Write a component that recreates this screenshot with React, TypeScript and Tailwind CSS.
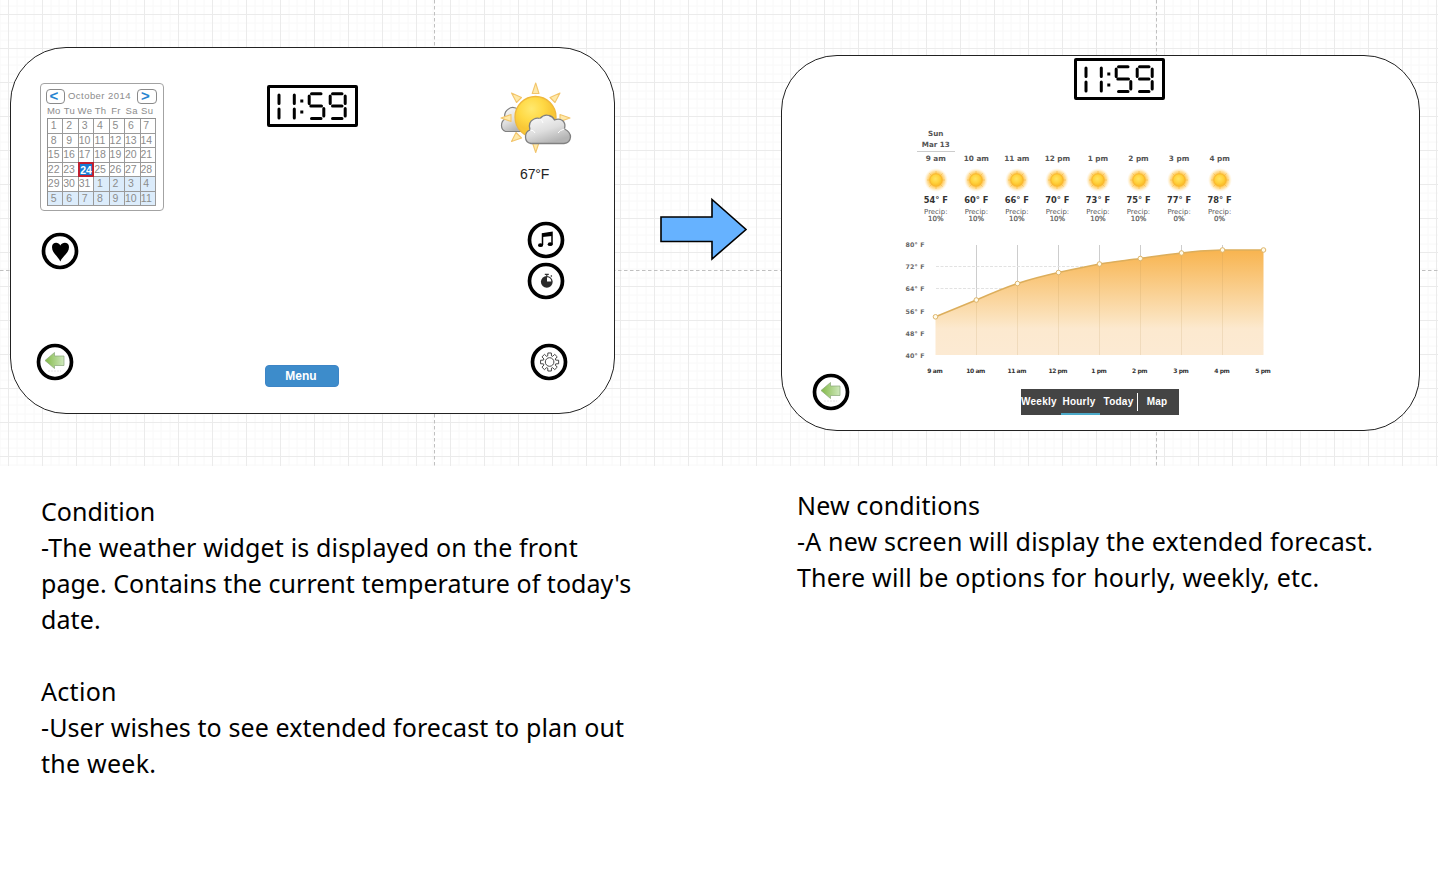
import React from "react";

function Clock() {
  return (
    <svg viewBox="0 0 91 42" className="h-[42px] w-[91px]">
      <rect x="1.5" y="1.5" width="88" height="39" rx="0.5" fill="#fff" stroke="#000" strokeWidth="3" />
      <g stroke="#000" strokeWidth="3" strokeLinecap="round" fill="none">
        <path d="M12 10V18.500M12 24V33M27.300 10V18.500M27.300 24V33" />
        <path d="M44.500 8.800H54M43.800 20.900H54.500M44.500 33.400H54M42.200 11V18.500M56.800 23.500V31" />
        <path d="M65.500 8.800H75M65.500 20.900H75M65.500 33.400H75M63.200 11V18.500M78.200 11V18.500M78.200 23.500V31" />
      </g>
      <path d="M33.300 14.500h3v3h-3zM33.300 25.500h3v3h-3z" />
    </svg>
  );
}

const days = [1,2,3,4,5,6,7,8,9,10,11,12,13,14,15,16,17,18,19,20,21,22,23,24,25,26,27,28,29,30,31,1,2,3,4,5,6,7,8,9,10,11];

function Calendar() {
  return (
    <div className="h-[128px] w-[124px] rounded-[4px] border border-[#a3a3a3] bg-white px-[5px] pt-[5px] text-[#8c8c8c]">
      <div className="flex h-[15px] items-center gap-[2px]">
        <div className="flex h-[15px] w-[19px] items-center justify-center rounded-[4px] border border-[#8a8a8a] pr-[3px] pb-[2px] text-[15px] leading-none font-bold text-[#2684d0]">&lt;</div>
        <span className="w-[68px] pr-[3px] text-center text-[9.500px] tracking-[0.450px] whitespace-nowrap">October 2014</span>
        <div className="flex h-[15px] w-[20px] items-center justify-center rounded-[4px] border border-[#8a8a8a] pr-[3px] pb-[2px] text-[15px] leading-none font-bold text-[#2684d0]">&gt;</div>
      </div>
      <div className="grid h-[14px] w-[109px] grid-cols-7 text-center text-[9.500px] leading-[13px] tracking-[0.300px]">
        {["Mo", "Tu", "We", "Th", "Fr", "Sa", "Su"].map((d) => <span key={d} className="-mx-px">{d}</span>)}
      </div>
      <div className="ml-[1px] grid h-[88px] w-[109px] grid-cols-7 grid-rows-6 border-t border-l border-[#909090] text-center text-[10.500px] leading-[13px]">
        {days.map((d, i) => (
          <span key={i} className={i === 23 ? "-mt-px -ml-px border-2 border-[#c02030] bg-[#167bd5] text-[10.500px] leading-[12px] font-bold text-white" : i > 30 ? "border-r border-b border-[#9a9a9a] bg-[#dcecfb] pr-[3px]" : "border-r border-b border-[#9a9a9a] pr-[3px]"}>
            <span className={i === 23 ? "-mx-[1px]" : "-mx-[2px]"}>{d}</span>
          </span>
        ))}
      </div>
    </div>
  );
}

function Ring({ children }: { children: React.ReactNode }) {
  return (
    <svg viewBox="0 0 38 38" className="h-[38px] w-[38px]">
      <circle cx="19" cy="19" r="16.500" fill="#fff" stroke="#000" strokeWidth="3.700" />
      {children}
    </svg>
  );
}

function BackIcon() {
  return (
    <Ring>
      <defs>
        <linearGradient id="leaf"><stop stopColor="#82b947" /><stop offset="1" stopColor="#cfe8bd" /></linearGradient>
      </defs>
      <path d="M9 17.500L18.500 9.500V13H28V22.500H18.500V25.500Z" fill="url(#leaf)" stroke="#8aa878" strokeWidth="0.700" />
      <path d="M12 28H25" stroke="#ddd" strokeWidth="0.800" strokeDasharray="2 1" />
    </Ring>
  );
}

function GearIcon() {
  const pts: string[] = [];
  for (let i = 0; i < 8; i++) {
    const a = (i * Math.PI) / 4 - Math.PI / 2;
    [[-0.3, 6.4], [-0.19, 9.2], [0.19, 9.2], [0.3, 6.4]].forEach(([o, r]) => pts.push((19.6 + r * Math.cos(a + o)).toFixed(2) + "," + (19 + r * Math.sin(a + o)).toFixed(2)));
  }
  return (
    <Ring>
      <polygon points={pts.join(" ")} fill="none" stroke="#333" strokeWidth="0.900" strokeLinejoin="round" />
      <circle cx="19.600" cy="19" r="4.300" fill="none" stroke="#333" strokeWidth="0.900" />
    </Ring>
  );
}

function Weather() {
  return (
    <svg viewBox="0 0 74 74" className="h-[74px] w-[74px]">
      <defs>
        <radialGradient id="sun" cx="0.4" cy="0.3"><stop stopColor="#ffe96f" /><stop offset="0.600" stopColor="#ffd945" /><stop offset="1" stopColor="#f8c736" /></radialGradient>
        <linearGradient id="cloud" x2="0.500" y2="1"><stop stopColor="#fff" /><stop offset="0.600" stopColor="#dedede" /><stop offset="1" stopColor="#b4b4b4" /></linearGradient>
      </defs>
      <path d="M5.500 50.500Q1.500 49 1.500 44.500Q1.500 40 5 38Q3.500 31 8.500 28Q13 24.500 19 29L25 50.500Z" fill="url(#cloud)" stroke="#808080" strokeWidth="1.200" />
      <g fill="#ffe9a8" stroke="#f2c56c" strokeWidth="1.100" strokeLinejoin="round">
        <path d="M35.700 2L39 12.500H32.200ZM11.500 12L21.500 16.500L16.500 21.500ZM60 12L55 21.500L50 16.500ZM70 37L60 40.500V33.500ZM1 37L11 33.500V40.500ZM11.500 60.500L16 51.500L21.500 57ZM35.700 71.500L32.700 62.500H38.700Z" />
      </g>
      <circle cx="35.500" cy="36" r="20.500" fill="url(#sun)" stroke="#efb83c" strokeWidth="1.300" />
      <path d="M31 62.500Q25.500 61.500 25.500 56Q25.500 50.500 30 49Q27.500 41 34 38Q37 36.500 40 37.500Q44 33 49 34.500Q53 35.500 54.500 39Q59 37 62.500 39.500Q66 42.500 64.500 48Q70.500 51 70.500 56Q70 62 64 62.500Z" fill="url(#cloud)" stroke="#808080" strokeWidth="1.300" />
      <path d="M30 49Q34 49 35 52M40 37.500Q42 39 43 42M64.500 48Q60 49 58 52" fill="none" stroke="#fff" strokeWidth="1" />
    </svg>
  );
}

const hours: [string, number, number][] = [["9 am", 54, 10], ["10 am", 60, 10], ["11 am", 66, 10], ["12 pm", 70, 10], ["1 pm", 73, 10], ["2 pm", 75, 10], ["3 pm", 77, 0], ["4 pm", 78, 0]];

function SmallSun() {
  return (
    <svg viewBox="0 0 24 24" className="h-[24px] w-[24px]">
      <defs>
        <radialGradient id="halo"><stop offset="0.500" stopColor="#ffc23c" /><stop offset="0.750" stopColor="#ffd98a" stopOpacity="0.750" /><stop offset="1" stopColor="#fff0cc" stopOpacity="0" /></radialGradient>
        <radialGradient id="disc" cx="0.450" cy="0.400"><stop stopColor="#ffe562" /><stop offset="0.700" stopColor="#ffd13a" /><stop offset="1" stopColor="#fbc22e" /></radialGradient>
      </defs>
      <circle cx="12" cy="12" r="12" fill="url(#halo)" />
      <path d="M12 3V21M3 12H21M5.500 5.500L18.500 18.500M18.500 5.500L5.500 18.500" stroke="#f8b83c" strokeWidth="0.800" opacity="0.700" />
      <circle cx="12" cy="12" r="6.200" fill="url(#disc)" stroke="#f5ad2e" strokeWidth="0.600" />
    </svg>
  );
}

function Forecast() {
  return (
    <div className="flex w-[325px] font-[Verdana,'DejaVu_Sans',sans-serif] text-[#555]">
      {hours.map(([h, t, p], i) => (
        <div key={h} className="flex w-[40.550px] shrink-0 flex-col items-center whitespace-nowrap">
          <div className={i === 0 ? "flex h-[24px] w-[38px] flex-col items-center border-b border-[#ccc] text-[7.200px] leading-[11px] font-bold" : "h-[24px]"}>
            {i === 0 && <><span>Sun</span><span>Mar 13</span></>}
          </div>
          <span className="mt-[1px] h-[12px] text-[7.300px] leading-[12px] font-bold">{h}</span>
          <div className="mt-[3px] h-[24px]"><SmallSun /></div>
          <span className="mt-[2px] h-[12px] text-[8.300px] leading-[12px] font-bold text-[#333]">{t}° F</span>
          <span className="mt-[2px] h-[8px] text-[6.900px] leading-[8px]">Precip:</span>
          <span className="h-[7px] text-[7px] leading-[7px] [-webkit-text-stroke:0.200px_#555]">{p}%</span>
        </div>
      ))}
    </div>
  );
}

const px = [35.5, 76.3, 117.5, 158.5, 199.5, 240.3, 281.5, 322.5, 363.5];
const py = [76.8, 60, 43.5, 32.5, 24, 18.5, 13, 10, 10];
const curve = "M35.500 76.800L76.300 60C90 54 104 48 117.500 43.500C131 39 145 35.500 158.500 32.500S186 26.500 199.500 24S226 20.500 240.300 18.500S266 14.500 281.500 13C295 11 309 10.300 322.500 10L363.500 10";

function Chart() {
  return (
    <svg viewBox="0 0 380 140" className="h-[140px] w-[380px]" fontFamily="'DejaVu Sans', sans-serif" fontWeight="bold">
      <defs>
        <linearGradient id="heat" gradientUnits="userSpaceOnUse" x1="0" y1="10" x2="0" y2="115">
          <stop stopColor="#f8b44f" /><stop offset="0.650" stopColor="#fbe2bc" /><stop offset="0.750" stopColor="#fce9cf" /><stop offset="1" stopColor="#fcead3" />
        </linearGradient>
      </defs>
      <g stroke="#cdcdcd" strokeWidth="1">{px.slice(1, 8).map((x) => <path key={x} d={`M${Math.floor(x) + 0.5} 5V115`} />)}</g>
      <path d="M36 26.500H363M36 48.500H363" stroke="#e2e2e2" strokeDasharray="3 1.500" />
      <path d={curve + "V115H35.500Z"} fill="url(#heat)" />
      <g stroke="#b58e50" strokeOpacity="0.160" strokeWidth="1">{px.slice(1, 8).map((x, i) => <path key={x} d={`M${Math.floor(x) + 0.5} ${py[i + 1]}V115`} />)}</g>
      <path d={curve} fill="none" stroke="#dcae5c" strokeWidth="1.500" />
      {px.map((x, i) => <circle key={x} cx={x} cy={py[i]} r="2.300" fill="#fffbea" stroke="#deb56c" strokeWidth="1" />)}
      <g fontSize="6.300" fill="#666">
        {[80, 72, 64, 56, 48, 40].map((t, i) => <text key={t} x="5.500" y={7 + i * 22.2} textLength="19">{t}° F</text>)}
      </g>
      <g fontSize="6" fill="#333" textAnchor="middle">
        {["9 am", "10 am", "11 am", "12 pm", "1 pm", "2 pm", "3 pm", "4 pm", "5 pm"].map((t, i) => <text key={t} x={px[i] - 0.5} y="133" textLength={t.length > 4 ? 19 : 15.5}>{t}</text>)}
      </g>
    </svg>
  );
}

function Grid() {
  return (
    <svg className="absolute inset-0 h-[466px] w-[1438px]" viewBox="0 0 1438 466">
      <defs>
        <pattern id="grid" x="8" y="14" width="34" height="34" patternUnits="userSpaceOnUse">
          <path d="M9 0V34M17 0V34M26 0V34M0 9H34M0 17H34M0 26H34" stroke="#f8f8f8" fill="none" />
          <path d="M0.500 0V34M0 0.500H34" stroke="#ebebeb" fill="none" />
        </pattern>
      </defs>
      <rect width="1438" height="466" fill="url(#grid)" />
      <path d="M434.500 0V466M1156.500 0V466M0 270.500H1438" stroke="#c0c0c0" strokeDasharray="3.500 2.500" />
    </svg>
  );
}

const notesLeft: [string, string][] = [
  ["Condition", "tracking-[0px]"],
  ["-The weather widget is displayed on the front", "tracking-[0.150px]"],
  ["page. Contains the current temperature of today's", "tracking-[0.030px]"],
  ["date.", "tracking-[0.100px]"],
  ["", ""],
  ["Action", "tracking-[0.300px]"],
  ["-User wishes to see extended forecast to plan out", "tracking-[0.090px]"],
  ["the week.", "tracking-[0.250px]"],
];
const notesRight: [string, string][] = [
  ["New conditions", "tracking-[0.140px]"],
  ["-A new screen will display the extended forecast.", "tracking-[0.180px]"],
  ["There will be options for hourly, weekly, etc.", "tracking-[0.200px]"],
];

function Notes({ lines }: { lines: [string, string][] }) {
  return (
    <div className="font-['Noto_Sans',sans-serif] text-[25px] leading-[36px] whitespace-nowrap text-black">
      {lines.map(([t, c], i) => <p key={i} className="h-[36px]"><span className={c}>{t}</span></p>)}
    </div>
  );
}

export default function App() {
  return (
    <div className="h-[880px] w-[1438px] overflow-hidden bg-white font-['Liberation_Sans',sans-serif]">
      <div className="relative h-[466px] w-[1438px] overflow-hidden">
        <Grid />
        <div className="absolute top-[47px] left-[10px] h-[366.500px] w-[605px] rounded-[56px] border border-[#222] bg-white" />
        <div className="absolute top-[55px] left-[781px] h-[375.500px] w-[638.500px] rounded-[56px] border border-[#222] bg-white" />
        <div className="absolute top-[83px] left-[40px]"><Calendar /></div>
        <div className="absolute top-[85px] left-[267px]"><Clock /></div>
        <div className="absolute top-[81px] left-[500px]"><Weather /></div>
        <span className="absolute top-[166px] left-[520px] text-[14px] leading-[17px] tracking-[-0.100px] text-[#222]">67°F</span>
        <div className="absolute top-[232px] left-[41px]"><Ring><path d="M19.300 29.500C17.500 24.500 11 21.500 11 15C11 10 17.500 9.500 19.300 13.500C21.500 9.500 28 10 28 15C28 21.500 21 24.500 19.300 29.500Z" /></Ring></div>
        <div className="absolute top-[221px] left-[527px]"><Ring><path d="M15.500 24V13L25 11.500V23" fill="none" stroke="#000" strokeWidth="1.500" /><path d="M15.500 12.500L25 11.500V15L15.500 16Z" /><ellipse cx="13.500" cy="24.200" rx="2.500" ry="1.900" /><ellipse cx="23.200" cy="23.200" rx="2.500" ry="1.900" /></Ring></div>
        <div className="absolute top-[262px] left-[527px]"><Ring><circle cx="19.800" cy="19.800" r="5.900" fill="#292929" /><path d="M20 19.600V15.200A4.500 4.500 0 0 1 24.300 19.600Z" fill="#fff" /><path d="M17.800 12.300H21.800M19.800 12V14M23.800 13.500L24.800 14.500" stroke="#333" strokeWidth="1.200" /></Ring></div>
        <div className="absolute top-[343px] left-[36px]"><BackIcon /></div>
        <div className="absolute top-[343px] left-[530px]"><GearIcon /></div>
        <div className="absolute top-[365px] left-[265px] flex h-[22px] w-[74px] items-center justify-center rounded-[4px] border border-[#3d85c6] bg-[#3d8ccb] pr-[2px] text-[12px] font-bold text-white">Menu</div>
        <svg className="absolute top-[197px] left-[658px] h-[66px] w-[92px]" viewBox="0 0 92 66"><path d="M3 20H54V2.500L88 32.500L54 62V44.500H3Z" fill="#66b2ff" stroke="#000" strokeWidth="1.600" /></svg>
        <div className="absolute top-[58px] left-[1074px]"><Clock /></div>
        <div className="absolute top-[128px] left-[915.500px]"><Forecast /></div>
        <div className="absolute top-[240px] left-[900px]"><Chart /></div>
        <div className="absolute top-[373px] left-[812px]"><BackIcon /></div>
        <div className="absolute top-[389px] left-[1021px] flex h-[26px] w-[158px] bg-[#444] text-[10px] leading-[25px] font-bold tracking-[0.250px] whitespace-nowrap text-white">
          <span className="w-[40px]">Weekly</span>
          <span className="w-[39px] border-b-2 border-[#4ba9c8] pt-[1px] pr-[3px] text-center leading-[24px]">Hourly</span>
          <span className="w-[37px] text-center">Today</span>
          <span className="my-[4px] w-px bg-white" />
          <span className="w-[38px] text-center">Map</span>
        </div>
      </div>
      <div className="flex h-[414px]">
        <div className="w-[756px] pt-[27px] pl-[41px]"><Notes lines={notesLeft} /></div>
        <div className="pt-[21px] pl-[41px]"><Notes lines={notesRight} /></div>
      </div>
    </div>
  );
}
